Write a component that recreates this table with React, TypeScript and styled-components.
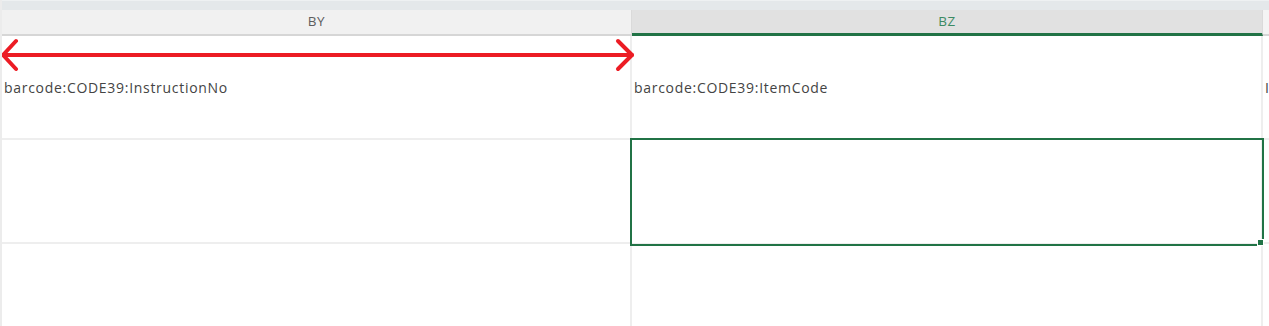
import styled, { createGlobalStyle, css } from "styled-components";

const GlobalStyle = createGlobalStyle`
  html, body {
    margin: 0;
    padding: 0;
    background: #ffffff;
    overflow: hidden;
  }
  body {
    font-family: "Open Sans", "Liberation Sans", sans-serif;
  }
`;

// the third column only peeks in at the right edge
const columns = [
  { name: "BY", active: false },
  { name: "BZ", active: true },
  { name: "", active: false },
];

const rows = [
  ["barcode:CODE39:InstructionNo", "barcode:CODE39:ItemCode", "I"],
  ["", "", ""],
  ["", "", ""],
];

export default function App() {
  return (
    <>
      <GlobalStyle />
      <Sheet>
        <TopStrip />
        <Grid>
          {columns.map((col, i) => (
            <ColumnHeader key={i} $active={col.active}>
              {col.name}
            </ColumnHeader>
          ))}
          {rows.map((row, r) =>
            row.map((value, c) => (
              <Cell key={`${r}-${c}`} $selected={r === 1 && c === 1}>
                {value}
              </Cell>
            ))
          )}
        </Grid>
        <WidthArrow width="640" height="40" viewBox="0 0 640 40">
          <line x1="4" y1="20" x2="632" y2="20" />
          <polyline points="16,6 3,20 16,34" />
          <polyline points="618,6 632,20 618,34" />
        </WidthArrow>
      </Sheet>
    </>
  );
}

const Sheet = styled.div`
  position: relative;
  width: 1269px;
  height: 326px;
  overflow: hidden;
  border-left: 2px solid #ececec;
  box-sizing: border-box;
`;

const TopStrip = styled.div`
  height: 10px;
  background: #e4e8ea;
  border-top: 1px solid #eef1f2;
  box-sizing: border-box;
`;

const Grid = styled.div`
  display: grid;
  grid-template-columns: 630px 631px 40px;
  grid-template-rows: 26px 104px 104px 104px;
`;

const ColumnHeader = styled.div<{ $active: boolean }>`
  display: flex;
  align-items: center;
  justify-content: center;
  padding-bottom: 2px;
  box-sizing: border-box;
  font-size: 13.5px;
  letter-spacing: 0.5px;
  color: #5e5e5e;
  background: #f1f1f1;
  border-right: 1px solid #dadada;
  border-bottom: 2px solid #d6d6d6;

  ${(p) =>
    p.$active &&
    css`
      background: #e1e1e1;
      color: #3c8a63;
      border-bottom: 3px solid #217346;
      padding-bottom: 1px;
    `}

  &:nth-child(3) {
    background: #f4f4f4;
  }
`;

const Cell = styled.div<{ $selected: boolean }>`
  position: relative;
  display: flex;
  align-items: center;
  padding: 0 2px;
  box-sizing: border-box;
  font-size: 14px;
  letter-spacing: 0.7px;
  color: #444444;
  white-space: nowrap;
  border-right: 2px solid #eeeeee;
  border-bottom: 2px solid #eeeeee;
  background: #ffffff;

  ${(p) =>
    p.$selected &&
    css`
      z-index: 1;
      outline: 2px solid #217346;
      outline-offset: -1px;
      margin: -1px 0 -1px -1px;

      &::after {
        content: "";
        position: absolute;
        right: -3px;
        bottom: -3px;
        width: 5px;
        height: 5px;
        background: #217346;
        border: 1px solid #ffffff;
      }
    `}
`;

const WidthArrow = styled.svg`
  position: absolute;
  left: -2px;
  top: 35px;
  fill: none;
  stroke: #ec1c24;
  stroke-width: 4;
  stroke-linecap: round;
  stroke-linejoin: round;
  pointer-events: none;
`;
